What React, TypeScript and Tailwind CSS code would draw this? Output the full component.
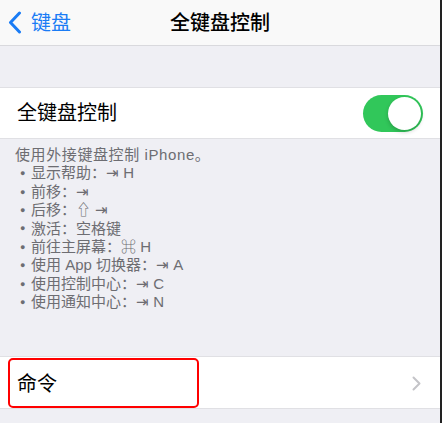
import React from 'react';

const font = { fontFamily: '"Liberation Sans", "Noto Sans CJK SC", sans-serif' };

const items = [
  '显示帮助：⇥ H',
  '前移：⇥',
  '后移：⇧ ⇥',
  '激活：空格键',
  '前往主屏幕：⌘ H',
  '使用 App 切换器：⇥ A',
  '使用控制中心：⇥ C',
  '使用通知中心：⇥ N',
];

const App = () => {
  return (
    <div className="flex w-[444px] h-[423px] bg-white overflow-hidden" style={font}>
      <div className="w-[440px] h-full bg-[#efeff4] flex flex-col">
        {/* Nav bar */}
        <div className="h-[46px] shrink-0 bg-[#f9f9f9] border-b border-[#d9d9dd] grid grid-cols-[1fr_auto_1fr] items-center">
          <div className="flex items-center pl-[8px] text-[#1a7cf5]">
            <svg width="14" height="23" viewBox="0 0 14 23" fill="none">
              <path d="M11.5 2 L2.5 11.5 L11.5 21" stroke="currentColor" strokeWidth="3" strokeLinecap="round" strokeLinejoin="round" />
            </svg>
            <span className="ml-[9px] text-[20px] leading-none">键盘</span>
          </div>
          <div className="text-[20px] font-medium text-black leading-none">全键盘控制</div>
          <div />
        </div>

        {/* Gap */}
        <div className="h-[41px] shrink-0" />

        {/* Toggle row */}
        <div className="h-[52px] shrink-0 bg-white border-y border-[#e0e0e4] flex items-center justify-between pl-[17px] pr-[17px]">
          <span className="text-[20px] text-black leading-none">全键盘控制</span>
          <div className="w-[60px] h-[37px] rounded-full bg-[#31c75a] relative mt-[1px]">
            <div className="absolute right-[2px] top-[2px] w-[33px] h-[33px] rounded-full bg-white shadow-[0_2px_4px_rgba(0,0,0,0.2)]" />
          </div>
        </div>

        {/* Footer text */}
        <div className="pt-[7px] pl-[15px] text-[15px] leading-[18.4px] text-[#6d6d72]">
          <div className="tracking-[0.6px]">使用外接键盘控制 iPhone。</div>
          {items.map((t) => (
            <div key={t} className="flex items-center">
              <span className="w-[16px] pl-[5px] text-[9px] leading-none">●</span>
              <span>{t}</span>
            </div>
          ))}
        </div>

        {/* Commands row */}
        <div className="mt-[44px] h-[53px] shrink-0 bg-white border-y border-[#e0e0e4] relative flex items-center justify-between pl-[17px] pr-[19px]">
          <span className="text-[20px] text-black leading-none mt-[3px]">命令</span>
          <svg width="9" height="15" viewBox="0 0 9 15" fill="none" className="mt-[2px]">
            <path d="M1.5 1.5 L7.5 7.5 L1.5 13.5" stroke="#c4c4c8" strokeWidth="2" strokeLinecap="round" strokeLinejoin="round" />
          </svg>
          <div className="absolute left-[8px] top-[1px] w-[191px] h-[50px] border-2 border-[#ff0000] rounded-[5px]" />
        </div>
      </div>
      <div className="w-[2px] h-full bg-[#222222]" />
    </div>
  );
};

export default App;
